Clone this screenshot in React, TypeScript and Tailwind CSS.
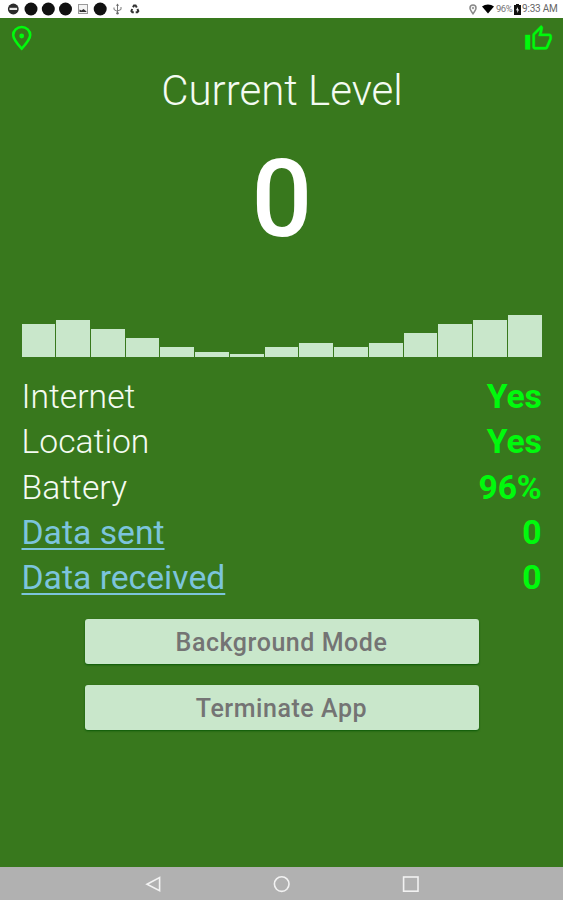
import React from "react";

const levels = [33, 37, 28, 19, 10, 5, 3, 10, 14, 10, 14, 24, 33, 37, 42];

const stats = [
  { name: "Internet", value: "Yes", link: false },
  { name: "Location", value: "Yes", link: false },
  { name: "Battery", value: "96%", link: false },
  { name: "Data sent", value: "0", link: true },
  { name: "Data received", value: "0", link: true },
];

const actions = ["Background Mode", "Terminate App"];

function StatusBar() {
  return (
    <div className="flex h-[18px] w-full items-center justify-between bg-white">
      <svg width="150" height="18" viewBox="0 0 150 18">
        <g fill="#111">
          <circle cx="13.3" cy="9" r="5.4" fill="#2b2b2b" />
          <circle cx="31" cy="9" r="6.5" />
          <circle cx="48.3" cy="9" r="6.5" />
          <circle cx="65.5" cy="9" r="6.5" />
          <circle cx="100.2" cy="9" r="6.5" />
        </g>
        <rect x="9.5" y="7.8" width="7.6" height="2.2" fill="#e8e8e8" />
        <rect x="78.5" y="4.5" width="9" height="9" fill="#f4f4f4" stroke="#999" />
        <path d="M79.5 12V9.5l2 1 2-1.5 3 2.5V12z" fill="#333" />
        <path d="M117.5 5v9M114 7.5v2l3.5 2M121 7v2.5l-3.5 1.5" fill="none" stroke="#777" />
        <circle cx="117.5" cy="13.3" r="1.2" fill="#666" />
        <path d="M116 5.8l1.5-2.3 1.5 2.3z" fill="#666" />
        <path
          d="M133 7.3l1-1.8h1.6l1.2 2M132.2 9l-.8 2 1 1.3h1.4M137.4 9l.9 2-1 1.3h-1.6"
          fill="none"
          stroke="#333"
          strokeWidth="2"
        />
      </svg>
      <div className="flex items-center pr-[4px]">
        <svg className="mr-[5px]" width="8" height="11" viewBox="0 0 8 11" fill="none" stroke="#888">
          <path d="M4 9.8C2.2 7.4 1 5.700 1 4a3 3 0 0 1 6 0c0 1.700-1.200 3.400-3 5.800z" strokeWidth="1.5" />
          <circle cx="4" cy="4" r="0.8" />
        </svg>
        <svg className="mr-[2px]" width="12" height="10" viewBox="0 0 12 10">
          <path d="M0 2.6C3.4-.2 8.6-.2 12 2.6L6 9.6z" fill="#000" />
        </svg>
        <span className="w-[18px] text-[9.5px] leading-none tracking-[-0.5px] text-[#777]">96%</span>
        <svg className="mr-px" width="7" height="11" viewBox="0 0 7 11">
          <path d="M2 0h3v1h2v10H0V1h2z" fill="#111" />
          <path d="M3.9 3L2 6.2h1.3V9L5 5.6H3.9z" fill="#fff" />
        </svg>
        <span className="w-[37px] text-[10px] leading-none tracking-[-0.2px] whitespace-nowrap text-[#666]">
          9:33 AM
        </span>
      </div>
    </div>
  );
}

function LevelChart() {
  return (
    <div className="flex h-[43px] items-end gap-px">
      {levels.map((level, i) => (
        <div key={i} className="flex-1 bg-[#c9e7cb]" style={{ height: level }} />
      ))}
    </div>
  );
}

function NavBar() {
  return (
    <div className="flex h-[33px] w-full items-center justify-center bg-[#b1b1b1]">
      <svg width="280" height="20" viewBox="0 0 280 20" fill="none" stroke="#f2f2f2" strokeWidth="1.6">
        <path d="M5 10.2L17.6 3.6v13.2z" />
        <circle cx="139.7" cy="10.1" r="7.3" />
        <rect x="261.6" y="3" width="14.4" height="14.2" />
      </svg>
    </div>
  );
}

export default function App() {
  return (
    <div className="flex h-[900px] w-[563px] flex-col overflow-hidden bg-[#38781d] font-[Roboto,sans-serif]">
      <StatusBar />
      <div className="flex h-[44px] items-start justify-between pt-[6px] pr-[10px] pl-[8px]">
        <svg width="28" height="28" viewBox="0 0 28 28" fill="none" stroke="#00fa0c">
          <path
            d="M13.7 24.6C8.5 19 5.2 15 5.2 11a8.5 8 0 0 1 17 0c0 4-3.3 8-8.5 13.6z"
            strokeWidth="2.6"
          />
          <circle cx="13.7" cy="12" r="2.4" fill="#00fa0c" stroke="none" />
        </svg>
        <svg width="29" height="29" viewBox="0 0 24 24" fill="#00fa0c" stroke="#00fa0c" strokeWidth="0.3">
          <path d="M9 21h9c.83 0 1.54-.5 1.84-1.22l3.02-7.05c.09-.23.14-.47.14-.73v-2c0-1.1-.9-2-2-2h-6.31l.95-4.57.03-.32c0-.41-.17-.79-.44-1.06L14.17 1 7.58 7.59C7.22 7.95 7 8.45 7 9v10c0 1.1.9 2 2 2zM9 9l4.34-4.34L12 10h9v2l-3 7H9V9zM1 9h4v12H1z" />
        </svg>
      </div>

      <div className="flex flex-1 flex-col px-[21.5px]">
        <h1 className="h-[57px] pl-px text-center text-[42px] leading-[57px] font-light text-[#f4fbf2]">
          Current Level
        </h1>
        <div className="mt-[15px] h-[180px] pl-px text-center text-[107px] leading-[131px] font-medium text-white">0</div>
        <LevelChart />

        <ul className="mt-[17px]">
          {stats.map((item) => (
            <li key={item.name} className="flex h-[45.4px] items-center justify-between text-[33.7px] leading-none">
              {item.link ? (
                <a href="#" className="text-[#7cc4dc] underline decoration-2 underline-offset-[4px]">
                  {item.name}
                </a>
              ) : (
                <span className="font-light text-[#f4fbf2]">{item.name}</span>
              )}
              <span className="font-bold tracking-[-0.2px] text-[#00fa0c]">{item.value}</span>
            </li>
          ))}
        </ul>

        <div className="mt-[18.5px] flex flex-col items-center gap-[21px]">
          {actions.map((action) => (
            <button
              key={action}
              className="h-[45px] w-[394px] rounded-[3px] bg-[#c9e7cb] pt-[2px] text-[25px] leading-none font-medium tracking-[0.55px] text-[#747474] shadow-[0_1px_2px_#0b5a08]"
            >
              {action}
            </button>
          ))}
        </div>
      </div>
      <NavBar />
    </div>
  );
}
